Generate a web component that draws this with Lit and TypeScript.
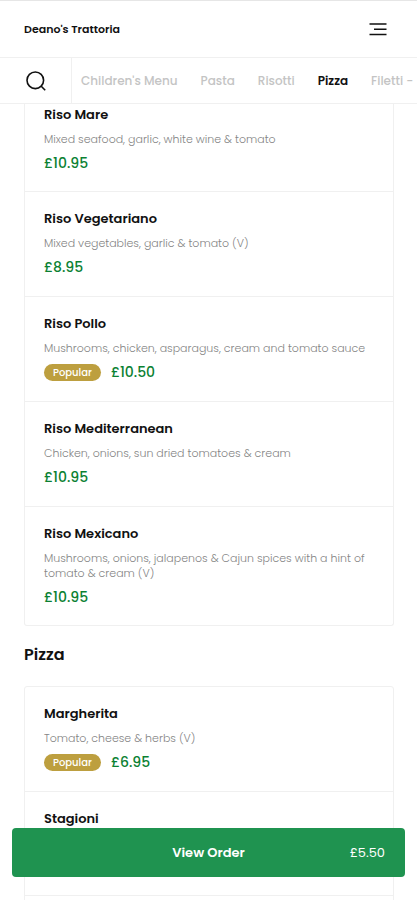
import { LitElement, html, css, nothing } from "lit";
import { customElement, property } from "lit/decorators.js";

interface Dish {
  name: string;
  description?: string;
  price?: string;
  popular?: boolean;
}

const risotti: Dish[] = [
  { name: "Riso Mare", description: "Mixed seafood, garlic, white wine & tomato", price: "£10.95" },
  { name: "Riso Vegetariano", description: "Mixed vegetables, garlic & tomato (V)", price: "£8.95" },
  { name: "Riso Pollo", description: "Mushrooms, chicken, asparagus, cream and tomato sauce", price: "£10.50", popular: true },
  { name: "Riso Mediterranean", description: "Chicken, onions, sun dried tomatoes & cream", price: "£10.95" },
  { name: "Riso Mexicano", description: "Mushrooms, onions, jalapenos & Cajun spices with a hint of tomato & cream (V)", price: "£10.95" },
];

const pizza: Dish[] = [
  { name: "Margherita", description: "Tomato, cheese & herbs (V)", price: "£6.95", popular: true },
  { name: "Stagioni" },
];

const categories = ["Children's Menu", "Pasta", "Risotti", "Pizza", "Filetti -"];

@customElement("dish-list")
class DishList extends LitElement {
  @property({ attribute: false }) dishes: Dish[] = [];
  @property({ type: Boolean, reflect: true }) continued = false;
  @property({ type: Boolean, reflect: true }) open = false;

  static styles = css`
    :host {
      display: block;
      border: 1px solid #f0f0f0;
      border-radius: 3px;
    }
    :host([continued]) {
      border-top: 0;
      border-top-left-radius: 0;
      border-top-right-radius: 0;
    }
    .list {
      list-style: none;
      margin: 0;
      padding: 0;
    }
    .dish {
      box-sizing: border-box;
      min-height: 104px;
      padding: 17px 20px 18px 19px;
      border-bottom: 1px solid #f0f0f0;
    }
    .dish:last-child {
      border-bottom: 0;
      padding-bottom: 17px;
    }
    :host([open]) .dish:last-child {
      border-bottom: 1px solid #f0f0f0;
      margin-bottom: 24px;
    }
    :host([continued]) .dish:first-child {
      min-height: 0;
      padding-top: 1px;
      padding-bottom: 17px;
    }
    .name {
      margin: 0;
      font-size: 13px;
      line-height: 20px;
      font-weight: 600;
      color: #111;
    }
    .description {
      margin: 7px 0 6px;
      font-size: 11px;
      line-height: 15px;
      font-weight: 300;
      color: #858585;
    }
    .foot {
      display: flex;
      align-items: center;
      gap: 10px;
    }
    .badge {
      padding: 0 9px;
      border-radius: 9px;
      background: #bd9f3f;
      color: #fff;
      font-size: 10px;
      line-height: 17px;
      font-weight: 500;
    }
    .price {
      font-size: 14px;
      line-height: 21px;
      font-weight: 500;
      color: #0b8132;
    }
  `;

  render() {
    return html`<ul class="list">
      ${this.dishes.map(
        (dish) => html`<li class="dish">
          <h3 class="name">${dish.name}</h3>
          ${dish.description ? html`<p class="description">${dish.description}</p>` : nothing}
          ${dish.price
            ? html`<div class="foot">
                ${dish.popular ? html`<span class="badge">Popular</span>` : nothing}
                <span class="price">${dish.price}</span>
              </div>`
            : nothing}
        </li>`
      )}
    </ul>`;
  }
}

@customElement("app-root")
class AppRoot extends LitElement {
  static styles = css`
    :host {
      position: relative;
      display: flex;
      flex-direction: column;
      height: 100vh;
      overflow: hidden;
      box-sizing: border-box;
      border-top: 1px solid #e6e6e6;
      background: #fff;
      color: #111;
      font-family: Poppins, Inter, "Liberation Sans", sans-serif;
    }
    .header {
      flex: none;
      display: flex;
      align-items: center;
      justify-content: space-between;
      height: 56px;
      padding: 0 30px 0 24px;
      border-bottom: 1px solid #f0f0f0;
    }
    .brand {
      margin: 0;
      font-size: 11px;
      line-height: 16px;
      font-weight: 600;
    }
    .icon-button {
      display: flex;
      align-items: center;
      justify-content: center;
      margin: 0;
      padding: 0;
      border: 0;
      background: none;
      color: #111;
      cursor: pointer;
    }
    .categories {
      flex: none;
      display: flex;
      height: 45px;
      border-bottom: 1px solid #f0f0f0;
    }
    .search {
      flex: none;
      box-sizing: border-box;
      width: 72px;
      border-right: 1px solid #f0f0f0;
    }
    .tabs {
      flex: 1;
      min-width: 0;
      display: flex;
      align-items: center;
      gap: 23px;
      padding-left: 9px;
      overflow: hidden;
    }
    .tab {
      flex: none;
      font-size: 12px;
      line-height: 18px;
      font-weight: 500;
      color: #c4c4c4;
      text-decoration: none;
      white-space: nowrap;
    }
    .tab[aria-current] {
      color: #111;
      font-weight: 600;
    }
    .menu {
      flex: 1;
      min-height: 0;
      padding: 0 23px 0 24px;
      overflow-y: auto;
      scrollbar-width: none;
    }
    .heading {
      margin: 17px 0 19px;
      font-size: 16px;
      line-height: 24px;
      font-weight: 600;
    }
    .order {
      position: absolute;
      left: 12px;
      right: 12px;
      bottom: 23px;
      display: grid;
      grid-template-columns: 1fr auto 1fr;
      align-items: center;
      height: 49px;
      padding: 0 20px;
      border: 0;
      border-radius: 4px;
      background: #1f9350;
      color: #fff;
      font-family: inherit;
      font-size: 13px;
      line-height: 20px;
      cursor: pointer;
    }
    .order-label {
      grid-column: 2;
      font-weight: 600;
    }
    .order-total {
      justify-self: end;
      font-weight: 400;
    }
  `;

  render() {
    return html`
      <header class="header">
        <h1 class="brand">Deano's Trattoria</h1>
        <button class="icon-button" aria-label="Open menu">
          <svg width="18" height="14" viewBox="0 0 18 14" fill="none" stroke="currentColor">
            <path stroke-width="1.500" d="M0.500 2H17.500M5 7.250H17.500M0.500 12.500H17.500" />
          </svg>
        </button>
      </header>
      <nav class="categories" aria-label="Menu categories">
        <button class="icon-button search" aria-label="Search">
          <svg width="20" height="20" viewBox="0 0 20 20" fill="none" stroke="currentColor" stroke-width="1.600">
            <circle cx="9.300" cy="9.300" r="8.300" />
            <path d="M15 15L19.200 19.200" />
          </svg>
        </button>
        <div class="tabs">
          ${categories.map(
            (name) => html`<a class="tab" href="#" aria-current=${name === "Pizza" ? "true" : nothing}>${name}</a>`
          )}
        </div>
      </nav>
      <main class="menu">
        <dish-list continued .dishes=${risotti}></dish-list>
        <h2 class="heading">Pizza</h2>
        <dish-list open .dishes=${pizza}></dish-list>
      </main>
      <button class="order">
        <span class="order-label">View Order</span>
        <span class="order-total">£5.50</span>
      </button>
    `;
  }
}
